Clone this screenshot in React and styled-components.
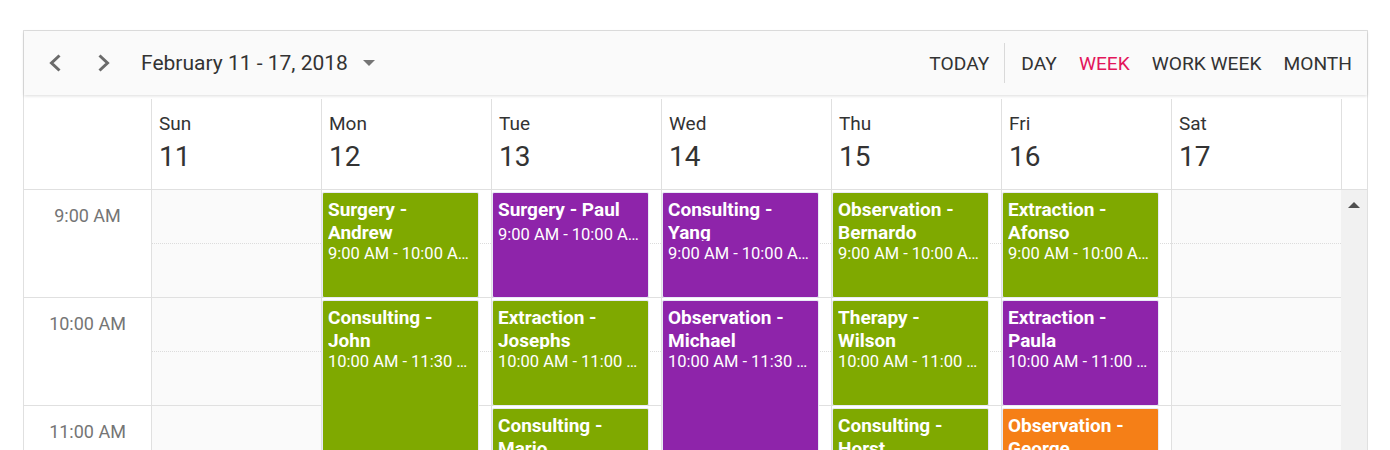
import React from 'react';
import styled, { createGlobalStyle } from 'styled-components';

const GlobalStyle = createGlobalStyle`
  html, body { margin: 0; padding: 0; background: #fff; overflow: hidden; }
  body { font-family: Roboto, "Liberation Sans", Arial, sans-serif; color: #333; }
  * { box-sizing: border-box; }
`;

const Page = styled.div`
  padding: 30px 22px 0 23px;
`;

const Scheduler = styled.div`
  width: 1345px;
  border: 1px solid #e0e0e0;
  background: #fff;
`;

const Toolbar = styled.div`
  position: relative;
  z-index: 2;
  height: 64px;
  display: flex;
  align-items: center;
  background: #fafafa;
  box-shadow: 0 1px 3px rgba(0, 0, 0, 0.14);
  padding: 0 4px 0 12px;
`;

const NavButton = styled.button`
  width: 38px;
  height: 40px;
  border: none;
  background: transparent;
  display: flex;
  align-items: center;
  justify-content: center;
  padding: 0;
  margin-right: ${p => p.$gap || 0}px;
`;

const DateRange = styled.div`
  display: flex;
  align-items: center;
  margin-left: 18px;
  font-size: 21px;
  color: #333;
  line-height: 24px;
`;

const Caret = styled.span`
  display: inline-block;
  margin-left: 15px;
  width: 0;
  height: 0;
  border-left: 6px solid transparent;
  border-right: 6px solid transparent;
  border-top: 6px solid #757575;
`;

const Spacer = styled.div`
  flex: 1;
`;

const ViewButton = styled.button`
  border: none;
  background: transparent;
  padding: 0 11px;
  height: 40px;
  font-family: Roboto, "Liberation Sans", Arial, sans-serif;
  font-size: 19.2px;
  text-transform: uppercase;
  color: ${p => (p.$active ? '#e3165b' : '#333')};
`;

const Separator = styled.div`
  width: 1px;
  height: 40px;
  background: #d9d9d9;
  margin: 0 5px 0 4px;
`;

const Grid = styled.div`
  display: grid;
  grid-template-columns: 127px repeat(7, 170px) 26px;
`;

const HeaderGrid = styled(Grid)`
  padding-top: 4px;
  border-bottom: 1px solid #e0e0e0;
`;

const HeaderCorner = styled.div`
  height: 90px;
`;

const DayHeader = styled.div`
  height: 90px;
  border-left: 1px solid #e0e0e0;
  padding: 15px 0 0 7px;
`;

const ScrollHeader = styled.div`
  height: 90px;
  border-left: 1px solid #e0e0e0;
`;

const DayName = styled.div`
  font-size: 19px;
  line-height: 20px;
  color: #333;
`;

const DayNumber = styled.div`
  margin-top: 7px;
  font-size: 28px;
  line-height: 32px;
  color: #333;
`;

const BodyGrid = styled(Grid)`
  height: 440px;
  overflow: hidden;
`;

const TimeColumn = styled.div`
  display: flex;
  flex-direction: column;
`;

const TimeCell = styled.div`
  height: 108px;
  flex: none;
  border-bottom: 1px solid #e0e0e0;
  text-align: center;
  padding-top: 16px;
  font-size: 18px;
  line-height: 20px;
  color: #757575;
`;

const DayColumn = styled.div`
  position: relative;
  border-left: 1px solid #e0e0e0;
  background: ${p => (p.$weekend ? '#fafafa' : '#fff')};
  display: flex;
  flex-direction: column;
`;

const HourSlot = styled.div`
  height: 108px;
  flex: none;
  border-bottom: 1px solid #e0e0e0;
`;

const HalfSlot = styled.div`
  height: 54px;
  border-bottom: 1px dotted #dcdcdc;
`;

const ScrollTrack = styled.div`
  background: #f1f1f1;
  display: flex;
  justify-content: center;
  padding-top: 12px;
`;

const ScrollArrow = styled.span`
  width: 0;
  height: 0;
  border-left: 6px solid transparent;
  border-right: 6px solid transparent;
  border-bottom: 6px solid #505050;
`;

const Appointment = styled.div`
  position: absolute;
  left: 0;
  width: 157px;
  top: ${p => p.$top}px;
  height: ${p => p.$height}px;
  background: ${p => p.$color};
  border: 1px solid #e8eaf6;
  border-radius: 2px;
  padding: 6px 8px 0 5px;
  color: #fff;
  overflow: hidden;
  z-index: 1;
`;

const Subject = styled.div`
  font-size: 19px;
  font-weight: 700;
  line-height: 22.5px;
  max-height: 42px;
  overflow: hidden;
  padding-right: 13px;
`;

const TimeText = styled.div`
  margin-top: 3px;
  font-size: 16.5px;
  line-height: 19px;
  white-space: nowrap;
  overflow: hidden;
  text-overflow: ellipsis;
`;

const GREEN = '#7fa900';
const PURPLE = '#8e24aa';
const ORANGE = '#f57f17';

const days = [
  { name: 'Sun', num: 11, weekend: true },
  { name: 'Mon', num: 12 },
  { name: 'Tue', num: 13 },
  { name: 'Wed', num: 14 },
  { name: 'Thu', num: 15 },
  { name: 'Fri', num: 16 },
  { name: 'Sat', num: 17, weekend: true },
];

const hours = [9, 10, 11, 12];
const fmt = h => {
  const hh = h % 12 === 0 ? 12 : h % 12;
  const m = h % 1 ? '30' : '00';
  return `${Math.floor(hh)}:${m} ${h >= 12 ? 'PM' : 'AM'}`;
};

const events = [
  { day: 1, start: 9, dur: 1, title: 'Surgery - Andrew', color: GREEN },
  { day: 1, start: 10, dur: 1.5, title: 'Consulting - John', color: GREEN },
  { day: 2, start: 9, dur: 1, title: 'Surgery - Paul', color: PURPLE },
  { day: 2, start: 10, dur: 1, title: 'Extraction - Josephs', color: GREEN },
  { day: 2, start: 11, dur: 1, title: 'Consulting - Mario', color: GREEN },
  { day: 3, start: 9, dur: 1, title: 'Consulting - Yang', color: PURPLE },
  { day: 3, start: 10, dur: 1.5, title: 'Observation - Michael', color: PURPLE },
  { day: 4, start: 9, dur: 1, title: 'Observation - Bernardo', color: GREEN },
  { day: 4, start: 10, dur: 1, title: 'Therapy - Wilson', color: GREEN },
  { day: 4, start: 11, dur: 1, title: 'Consulting - Horst', color: GREEN },
  { day: 5, start: 9, dur: 1, title: 'Extraction - Afonso', color: GREEN },
  { day: 5, start: 10, dur: 1, title: 'Extraction - Paula', color: PURPLE },
  { day: 5, start: 11, dur: 1, title: 'Observation - George', color: ORANGE },
];

const Chevron = ({ dir }) => (
  <svg width="14" height="18" viewBox="0 0 14 18">
    <polyline
      points={dir === 'left' ? '11.5,1.5 3.5,9 11.5,16.5' : '2.5,1.5 10.5,9 2.5,16.5'}
      fill="none"
      stroke="#6b6b6b"
      strokeWidth="3"
    />
  </svg>
);

export default function App() {
  return (
    <Page>
      <GlobalStyle />
      <Scheduler>
        <Toolbar>
          <NavButton $gap={11}><Chevron dir="left" /></NavButton>
          <NavButton><Chevron dir="right" /></NavButton>
          <DateRange>
            February 11 - 17, 2018
            <Caret />
          </DateRange>
          <Spacer />
          <ViewButton>Today</ViewButton>
          <Separator />
          <ViewButton>Day</ViewButton>
          <ViewButton $active>Week</ViewButton>
          <ViewButton>Work Week</ViewButton>
          <ViewButton>Month</ViewButton>
        </Toolbar>
        <HeaderGrid>
          <HeaderCorner />
          {days.map(d => (
            <DayHeader key={d.name}>
              <DayName>{d.name}</DayName>
              <DayNumber>{d.num}</DayNumber>
            </DayHeader>
          ))}
          <ScrollHeader />
        </HeaderGrid>
        <BodyGrid>
          <TimeColumn>
            {hours.map(h => (
              <TimeCell key={h}>{fmt(h)}</TimeCell>
            ))}
          </TimeColumn>
          {days.map((d, i) => (
            <DayColumn key={d.name} $weekend={d.weekend}>
              {hours.map(h => (
                <HourSlot key={h}>
                  <HalfSlot />
                </HourSlot>
              ))}
              {events
                .filter(e => e.day === i)
                .map(e => (
                  <Appointment
                    key={e.title}
                    $top={(e.start - 9) * 108 + 2}
                    $height={e.dur * 108 - 2}
                    $color={e.color}
                  >
                    <Subject>{e.title}</Subject>
                    <TimeText>{`${fmt(e.start)} - ${fmt(e.start + e.dur)}`}</TimeText>
                  </Appointment>
                ))}
            </DayColumn>
          ))}
          <ScrollTrack>
            <ScrollArrow />
          </ScrollTrack>
        </BodyGrid>
      </Scheduler>
    </Page>
  );
}
